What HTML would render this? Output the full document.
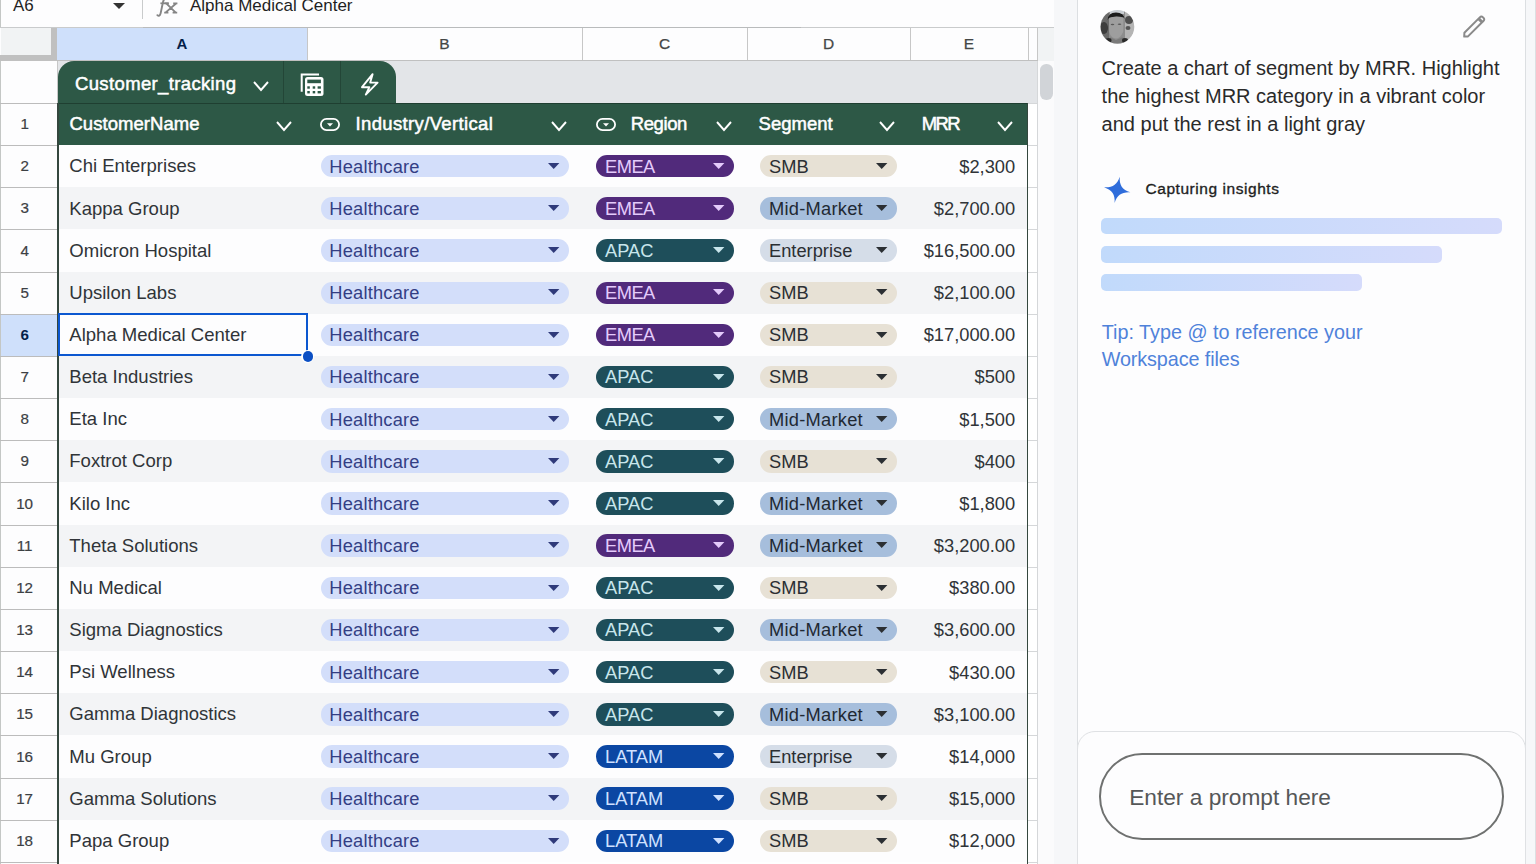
<!DOCTYPE html>
<html><head><meta charset="utf-8"><style>
html,body{margin:0;padding:0;width:1536px;height:864px;overflow:hidden;background:#fff;}
body{position:relative;font-family:"Liberation Sans",sans-serif;}
.r{position:absolute;}
.t{position:absolute;white-space:nowrap;}
svg{overflow:visible}
</style></head><body>
<div class="r" style="left:0px;top:0px;width:1054px;height:27px;background:#fdfdfe;"></div>
<div class="r" style="left:0px;top:0px;width:1px;height:864px;background:#c4c7c5;"></div>
<div class="r" style="left:0px;top:27px;width:1054px;height:1px;background:#c9cbcc;"></div>
<div class="r" style="left:143px;top:27px;width:658px;height:1px;background:#b9bbbc;"></div>
<div class="t " style="left:13.00px;top:-3.39px;font-size:17px;line-height:17px;color:#1f1f1f;font-weight:normal;">A6</div>
<svg class="r" style="left:112px;top:1px" width="14" height="9"><path d="M1 2 L13 2 L7 8 Z" fill="#333"/></svg>
<div class="r" style="left:142px;top:0px;width:1px;height:19px;background:#c9cbcc;"></div>
<svg class="r" style="left:150px;top:-6px" width="32" height="26" viewBox="150 -6 32 26">
<path d="M166.6 -3 C164.2 -2 163.4 0 162.8 3 L160.6 13.4 C160 16 158.6 16.4 157.4 15.2" fill="none" stroke="#858585" stroke-width="1.9" stroke-linecap="round"/>
<path d="M160.4 3.3 H168.6" stroke="#858585" stroke-width="1.7"/>
<path d="M166.2 3.3 L175.8 12.6 M176.4 3.3 L165.4 12.6 M164.6 3.3 H168.8 M173.2 3.3 H177.4 M164.2 12.6 H168.4 M172.6 12.6 H177.2" fill="none" stroke="#858585" stroke-width="1.8"/>
</svg>
<div class="t " style="left:190.00px;top:-3.39px;font-size:17px;line-height:17px;color:#1f1f1f;font-weight:normal;">Alpha Medical Center</div>
<div class="r" style="left:0px;top:28px;width:1054px;height:33px;background:#fdfdfe;"></div>
<div class="r" style="left:1px;top:28px;width:50px;height:27px;background:#f1f3f4;"></div>
<div class="r" style="left:51px;top:28px;width:6px;height:33px;background:#c0c0c0;"></div>
<div class="r" style="left:0px;top:55px;width:57px;height:6px;background:#c0c0c0;"></div>
<div class="r" style="left:57px;top:28px;width:250px;height:33px;background:#cfe0fb;"></div>
<div class="t" style="left:82.00px;width:200px;text-align:center;top:36.10px;font-size:15px;line-height:15px;color:#041e49;font-weight:bold;">A</div>
<div class="t" style="left:344.50px;width:200px;text-align:center;top:35.68px;font-size:15.5px;line-height:15.5px;color:#444746;font-weight:normal;-webkit-text-stroke:0.25px #444746;">B</div>
<div class="t" style="left:564.50px;width:200px;text-align:center;top:35.68px;font-size:15.5px;line-height:15.5px;color:#444746;font-weight:normal;-webkit-text-stroke:0.25px #444746;">C</div>
<div class="t" style="left:728.50px;width:200px;text-align:center;top:35.68px;font-size:15.5px;line-height:15.5px;color:#444746;font-weight:normal;-webkit-text-stroke:0.25px #444746;">D</div>
<div class="t" style="left:869.00px;width:200px;text-align:center;top:35.68px;font-size:15.5px;line-height:15.5px;color:#444746;font-weight:normal;-webkit-text-stroke:0.25px #444746;">E</div>
<div class="r" style="left:307px;top:28px;width:1px;height:33px;background:#c7c7c7;"></div>
<div class="r" style="left:582px;top:28px;width:1px;height:33px;background:#c7c7c7;"></div>
<div class="r" style="left:747px;top:28px;width:1px;height:33px;background:#c7c7c7;"></div>
<div class="r" style="left:910px;top:28px;width:1px;height:33px;background:#c7c7c7;"></div>
<div class="r" style="left:1028px;top:28px;width:1px;height:33px;background:#c7c7c7;"></div>
<div class="r" style="left:1037px;top:28px;width:1px;height:33px;background:#c7c7c7;"></div>
<div class="r" style="left:1038px;top:28px;width:16px;height:33px;background:#f1f3f4;"></div>
<div class="r" style="left:57px;top:60px;width:981px;height:1px;background:#c0c0c0;"></div>
<div class="r" style="left:1px;top:61px;width:56px;height:803px;background:#fdfdfe;"></div>
<div class="r" style="left:0px;top:103px;width:57px;height:1px;background:#c7c7c7;"></div>
<div class="r" style="left:0px;top:103px;width:57px;height:1px;background:#bcbcbc;"></div>
<div class="t" style="left:-75.40px;width:200px;text-align:center;top:116.11px;font-size:15.2px;line-height:15.2px;color:#3c4043;font-weight:normal;-webkit-text-stroke:0.2px #3c4043;">1</div>
<div class="r" style="left:0px;top:145px;width:57px;height:1px;background:#bcbcbc;"></div>
<div class="t" style="left:-75.40px;width:200px;text-align:center;top:158.27px;font-size:15.2px;line-height:15.2px;color:#3c4043;font-weight:normal;-webkit-text-stroke:0.2px #3c4043;">2</div>
<div class="r" style="left:0px;top:187px;width:57px;height:1px;background:#bcbcbc;"></div>
<div class="t" style="left:-75.40px;width:200px;text-align:center;top:200.43px;font-size:15.2px;line-height:15.2px;color:#3c4043;font-weight:normal;-webkit-text-stroke:0.2px #3c4043;">3</div>
<div class="r" style="left:0px;top:229px;width:57px;height:1px;background:#bcbcbc;"></div>
<div class="t" style="left:-75.40px;width:200px;text-align:center;top:242.59px;font-size:15.2px;line-height:15.2px;color:#3c4043;font-weight:normal;-webkit-text-stroke:0.2px #3c4043;">4</div>
<div class="r" style="left:0px;top:272px;width:57px;height:1px;background:#bcbcbc;"></div>
<div class="t" style="left:-75.40px;width:200px;text-align:center;top:284.75px;font-size:15.2px;line-height:15.2px;color:#3c4043;font-weight:normal;-webkit-text-stroke:0.2px #3c4043;">5</div>
<div class="r" style="left:1px;top:314px;width:56px;height:42px;background:#cfe0fb;"></div>
<div class="r" style="left:0px;top:314px;width:57px;height:1px;background:#bcbcbc;"></div>
<div class="t" style="left:-75.40px;width:200px;text-align:center;top:326.91px;font-size:15.2px;line-height:15.2px;color:#041e49;font-weight:bold;">6</div>
<div class="r" style="left:0px;top:356px;width:57px;height:1px;background:#bcbcbc;"></div>
<div class="t" style="left:-75.40px;width:200px;text-align:center;top:369.07px;font-size:15.2px;line-height:15.2px;color:#3c4043;font-weight:normal;-webkit-text-stroke:0.2px #3c4043;">7</div>
<div class="r" style="left:0px;top:398px;width:57px;height:1px;background:#bcbcbc;"></div>
<div class="t" style="left:-75.40px;width:200px;text-align:center;top:411.23px;font-size:15.2px;line-height:15.2px;color:#3c4043;font-weight:normal;-webkit-text-stroke:0.2px #3c4043;">8</div>
<div class="r" style="left:0px;top:440px;width:57px;height:1px;background:#bcbcbc;"></div>
<div class="t" style="left:-75.40px;width:200px;text-align:center;top:453.39px;font-size:15.2px;line-height:15.2px;color:#3c4043;font-weight:normal;-webkit-text-stroke:0.2px #3c4043;">9</div>
<div class="r" style="left:0px;top:482px;width:57px;height:1px;background:#bcbcbc;"></div>
<div class="t" style="left:-75.40px;width:200px;text-align:center;top:495.55px;font-size:15.2px;line-height:15.2px;color:#3c4043;font-weight:normal;-webkit-text-stroke:0.2px #3c4043;">10</div>
<div class="r" style="left:0px;top:525px;width:57px;height:1px;background:#bcbcbc;"></div>
<div class="t" style="left:-75.40px;width:200px;text-align:center;top:537.71px;font-size:15.2px;line-height:15.2px;color:#3c4043;font-weight:normal;-webkit-text-stroke:0.2px #3c4043;">11</div>
<div class="r" style="left:0px;top:567px;width:57px;height:1px;background:#bcbcbc;"></div>
<div class="t" style="left:-75.40px;width:200px;text-align:center;top:579.87px;font-size:15.2px;line-height:15.2px;color:#3c4043;font-weight:normal;-webkit-text-stroke:0.2px #3c4043;">12</div>
<div class="r" style="left:0px;top:609px;width:57px;height:1px;background:#bcbcbc;"></div>
<div class="t" style="left:-75.40px;width:200px;text-align:center;top:622.03px;font-size:15.2px;line-height:15.2px;color:#3c4043;font-weight:normal;-webkit-text-stroke:0.2px #3c4043;">13</div>
<div class="r" style="left:0px;top:651px;width:57px;height:1px;background:#bcbcbc;"></div>
<div class="t" style="left:-75.40px;width:200px;text-align:center;top:664.19px;font-size:15.2px;line-height:15.2px;color:#3c4043;font-weight:normal;-webkit-text-stroke:0.2px #3c4043;">14</div>
<div class="r" style="left:0px;top:693px;width:57px;height:1px;background:#bcbcbc;"></div>
<div class="t" style="left:-75.40px;width:200px;text-align:center;top:706.35px;font-size:15.2px;line-height:15.2px;color:#3c4043;font-weight:normal;-webkit-text-stroke:0.2px #3c4043;">15</div>
<div class="r" style="left:0px;top:735px;width:57px;height:1px;background:#bcbcbc;"></div>
<div class="t" style="left:-75.40px;width:200px;text-align:center;top:748.51px;font-size:15.2px;line-height:15.2px;color:#3c4043;font-weight:normal;-webkit-text-stroke:0.2px #3c4043;">16</div>
<div class="r" style="left:0px;top:778px;width:57px;height:1px;background:#bcbcbc;"></div>
<div class="t" style="left:-75.40px;width:200px;text-align:center;top:790.67px;font-size:15.2px;line-height:15.2px;color:#3c4043;font-weight:normal;-webkit-text-stroke:0.2px #3c4043;">17</div>
<div class="r" style="left:0px;top:820px;width:57px;height:1px;background:#bcbcbc;"></div>
<div class="t" style="left:-75.40px;width:200px;text-align:center;top:832.83px;font-size:15.2px;line-height:15.2px;color:#3c4043;font-weight:normal;-webkit-text-stroke:0.2px #3c4043;">18</div>
<div class="r" style="left:0px;top:862px;width:57px;height:1px;background:#bcbcbc;"></div>
<div class="r" style="left:57px;top:61px;width:1px;height:42px;background:#c7c7c7;"></div>
<div class="r" style="left:58px;top:61px;width:980px;height:42px;background:#e3e5e8;"></div>
<div class="r" style="left:58px;top:61px;width:337.5px;height:42px;background:#2d5846;border-radius:16px 16px 0 0"></div>
<div class="r" style="left:283px;top:61px;width:1px;height:42px;background:#234637;"></div>
<div class="r" style="left:340px;top:61px;width:1px;height:42px;background:#234637;"></div>
<div class="t " style="left:75.00px;top:75.14px;font-size:18.5px;line-height:18.5px;color:#ffffff;font-weight:normal;letter-spacing:0.36px;-webkit-text-stroke:0.5px #fff;">Customer_tracking</div>
<svg class="r" style="left:252.5px;top:81px" width="16" height="10"><polyline points="1,1 8.0,9 15,1" fill="none" stroke="#fff" stroke-width="1.9"/></svg>
<svg class="r" style="left:298px;top:71px" width="28" height="28" viewBox="298 71 28 28">
<path d="M301.7 91.7 V74.4 H319" fill="none" stroke="#fff" stroke-width="2"/>
<rect x="305" y="77" width="18.5" height="19" rx="2.5" fill="#fff"/>
<rect x="307.3" y="79.6" width="13.6" height="3.6" fill="#2d5846"/>
<rect x="307.3" y="86.3" width="2.5" height="2.4" fill="#2d5846"/>
<rect x="312.7" y="86.3" width="2.5" height="2.4" fill="#2d5846"/>
<rect x="317.6" y="86.3" width="3.3" height="2.4" fill="#2d5846"/>
<rect x="307.3" y="91" width="2.5" height="2.4" fill="#2d5846"/>
<rect x="312.7" y="91" width="2.5" height="2.4" fill="#2d5846"/>
<rect x="317.6" y="91" width="3.3" height="2.4" fill="#2d5846"/>
</svg>
<svg class="r" style="left:356px;top:70px" width="28" height="28" viewBox="356 70 28 28">
<path d="M372.6 74.2 L362 87.2 H369.4 L365.8 94.6 L377.6 82.6 H370.2 Z" fill="none" stroke="#fff" stroke-width="1.9" stroke-linejoin="round"/>
</svg>
<div class="r" style="left:58px;top:103px;width:970px;height:42.2px;background:#2d5846;"></div>
<div class="r" style="left:58px;top:103px;width:970px;height:1px;background:#1f3f31;"></div>
<div class="t " style="left:69.40px;top:115.04px;font-size:18.5px;line-height:18.5px;color:#ffffff;font-weight:normal;letter-spacing:0.05px;-webkit-text-stroke:0.5px #fff;">CustomerName</div>
<svg class="r" style="left:276px;top:121px" width="16" height="10"><polyline points="1,1 8.0,9 15,1" fill="none" stroke="#fff" stroke-width="1.9"/></svg>
<svg class="r" style="left:320.3px;top:118px" width="21" height="14"><rect x="0.9" y="0.9" width="18.2" height="11.2" rx="5.6" fill="none" stroke="#fff" stroke-width="1.8"/><path d="M7 5.2 H13 L10 8.4 Z" fill="#fff"/></svg>
<div class="t " style="left:355.50px;top:115.04px;font-size:18.5px;line-height:18.5px;color:#ffffff;font-weight:normal;letter-spacing:0.36px;-webkit-text-stroke:0.5px #fff;">Industry/Vertical</div>
<svg class="r" style="left:551px;top:121px" width="16" height="10"><polyline points="1,1 8.0,9 15,1" fill="none" stroke="#fff" stroke-width="1.9"/></svg>
<svg class="r" style="left:595.7px;top:118px" width="21" height="14"><rect x="0.9" y="0.9" width="18.2" height="11.2" rx="5.6" fill="none" stroke="#fff" stroke-width="1.8"/><path d="M7 5.2 H13 L10 8.4 Z" fill="#fff"/></svg>
<div class="t " style="left:630.70px;top:115.04px;font-size:18.5px;line-height:18.5px;color:#ffffff;font-weight:normal;letter-spacing:-0.4px;-webkit-text-stroke:0.5px #fff;">Region</div>
<svg class="r" style="left:716px;top:121px" width="16" height="10"><polyline points="1,1 8.0,9 15,1" fill="none" stroke="#fff" stroke-width="1.9"/></svg>
<div class="t " style="left:758.60px;top:115.04px;font-size:18.5px;line-height:18.5px;color:#ffffff;font-weight:normal;letter-spacing:0px;-webkit-text-stroke:0.5px #fff;">Segment</div>
<svg class="r" style="left:879px;top:121px" width="16" height="10"><polyline points="1,1 8.0,9 15,1" fill="none" stroke="#fff" stroke-width="1.9"/></svg>
<div class="t " style="left:921.80px;top:115.04px;font-size:18.5px;line-height:18.5px;color:#ffffff;font-weight:normal;letter-spacing:-1.6px;-webkit-text-stroke:0.5px #fff;">MRR</div>
<svg class="r" style="left:997px;top:121px" width="16" height="10"><polyline points="1,1 8.0,9 15,1" fill="none" stroke="#fff" stroke-width="1.9"/></svg>
<div class="r" style="left:58px;top:145.16px;width:970px;height:42.16px;background:#fdfdfe"></div>
<div class="t " style="left:69.30px;top:157.34px;font-size:18.55px;line-height:18.55px;color:#303438;font-weight:normal;">Chi Enterprises</div>
<div class="r" style="left:320.5px;top:155.04px;width:248.79999999999995px;height:22.4px;background:#d3defa;border-radius:11.2px"></div><div class="t " style="left:329.30px;top:157.65px;font-size:18.3px;line-height:18.3px;color:#343e84;font-weight:normal;letter-spacing:0.2px;">Healthcare</div><svg class="r" style="left:548.2px;top:162.94px" width="11.4" height="6"><path d="M0 0 H11.4 L5.7 6 Z" fill="#2f3a7a"/></svg>
<div class="r" style="left:596px;top:155.04px;width:137.5px;height:22.4px;background:#512a7b;border-radius:11.2px"></div><div class="t " style="left:605.00px;top:157.65px;font-size:18.3px;line-height:18.3px;color:#e4cbfb;font-weight:normal;letter-spacing:-0.5px;">EMEA</div><svg class="r" style="left:712.8px;top:162.94px" width="11.4" height="6"><path d="M0 0 H11.4 L5.7 6 Z" fill="#e4cbfb"/></svg>
<div class="r" style="left:760.4px;top:155.04px;width:136.30000000000007px;height:22.4px;background:#e7e1d5;border-radius:11.2px"></div><div class="t " style="left:769.00px;top:157.65px;font-size:18.3px;line-height:18.3px;color:#2b2f33;font-weight:normal;letter-spacing:0px;">SMB</div><svg class="r" style="left:875.8px;top:162.94px" width="11.4" height="6"><path d="M0 0 H11.4 L5.7 6 Z" fill="#2b2f33"/></svg>
<div class="t" style="right:520.80px;top:157.65px;font-size:18.3px;line-height:18.3px;color:#303438;font-weight:normal;">$2,300</div>
<div class="r" style="left:58px;top:187.32px;width:970px;height:42.16px;background:#f3f4f6"></div>
<div class="t " style="left:69.30px;top:199.50px;font-size:18.55px;line-height:18.55px;color:#303438;font-weight:normal;">Kappa Group</div>
<div class="r" style="left:320.5px;top:197.20px;width:248.79999999999995px;height:22.4px;background:#d3defa;border-radius:11.2px"></div><div class="t " style="left:329.30px;top:199.81px;font-size:18.3px;line-height:18.3px;color:#343e84;font-weight:normal;letter-spacing:0.2px;">Healthcare</div><svg class="r" style="left:548.2px;top:205.09999999999997px" width="11.4" height="6"><path d="M0 0 H11.4 L5.7 6 Z" fill="#2f3a7a"/></svg>
<div class="r" style="left:596px;top:197.20px;width:137.5px;height:22.4px;background:#512a7b;border-radius:11.2px"></div><div class="t " style="left:605.00px;top:199.81px;font-size:18.3px;line-height:18.3px;color:#e4cbfb;font-weight:normal;letter-spacing:-0.5px;">EMEA</div><svg class="r" style="left:712.8px;top:205.09999999999997px" width="11.4" height="6"><path d="M0 0 H11.4 L5.7 6 Z" fill="#e4cbfb"/></svg>
<div class="r" style="left:760.4px;top:197.20px;width:136.30000000000007px;height:22.4px;background:#a6bedc;border-radius:11.2px"></div><div class="t " style="left:769.00px;top:199.81px;font-size:18.3px;line-height:18.3px;color:#1f2933;font-weight:normal;letter-spacing:0.25px;">Mid-Market</div><svg class="r" style="left:875.8px;top:205.09999999999997px" width="11.4" height="6"><path d="M0 0 H11.4 L5.7 6 Z" fill="#2b2f33"/></svg>
<div class="t" style="right:520.80px;top:199.81px;font-size:18.3px;line-height:18.3px;color:#303438;font-weight:normal;">$2,700.00</div>
<div class="r" style="left:58px;top:229.48px;width:970px;height:42.16px;background:#fdfdfe"></div>
<div class="t " style="left:69.30px;top:241.66px;font-size:18.55px;line-height:18.55px;color:#303438;font-weight:normal;">Omicron Hospital</div>
<div class="r" style="left:320.5px;top:239.36px;width:248.79999999999995px;height:22.4px;background:#d3defa;border-radius:11.2px"></div><div class="t " style="left:329.30px;top:241.97px;font-size:18.3px;line-height:18.3px;color:#343e84;font-weight:normal;letter-spacing:0.2px;">Healthcare</div><svg class="r" style="left:548.2px;top:247.26px" width="11.4" height="6"><path d="M0 0 H11.4 L5.7 6 Z" fill="#2f3a7a"/></svg>
<div class="r" style="left:596px;top:239.36px;width:137.5px;height:22.4px;background:#1e4e5a;border-radius:11.2px"></div><div class="t " style="left:605.00px;top:241.97px;font-size:18.3px;line-height:18.3px;color:#c9e6ec;font-weight:normal;letter-spacing:0px;">APAC</div><svg class="r" style="left:712.8px;top:247.26px" width="11.4" height="6"><path d="M0 0 H11.4 L5.7 6 Z" fill="#c9e6ec"/></svg>
<div class="r" style="left:760.4px;top:239.36px;width:136.30000000000007px;height:22.4px;background:#d5dde8;border-radius:11.2px"></div><div class="t " style="left:769.00px;top:241.97px;font-size:18.3px;line-height:18.3px;color:#2b2f33;font-weight:normal;letter-spacing:0px;">Enterprise</div><svg class="r" style="left:875.8px;top:247.26px" width="11.4" height="6"><path d="M0 0 H11.4 L5.7 6 Z" fill="#2b2f33"/></svg>
<div class="t" style="right:520.80px;top:241.97px;font-size:18.3px;line-height:18.3px;color:#303438;font-weight:normal;">$16,500.00</div>
<div class="r" style="left:58px;top:271.64px;width:970px;height:42.16px;background:#f3f4f6"></div>
<div class="t " style="left:69.30px;top:283.82px;font-size:18.55px;line-height:18.55px;color:#303438;font-weight:normal;">Upsilon Labs</div>
<div class="r" style="left:320.5px;top:281.52px;width:248.79999999999995px;height:22.4px;background:#d3defa;border-radius:11.2px"></div><div class="t " style="left:329.30px;top:284.13px;font-size:18.3px;line-height:18.3px;color:#343e84;font-weight:normal;letter-spacing:0.2px;">Healthcare</div><svg class="r" style="left:548.2px;top:289.41999999999996px" width="11.4" height="6"><path d="M0 0 H11.4 L5.7 6 Z" fill="#2f3a7a"/></svg>
<div class="r" style="left:596px;top:281.52px;width:137.5px;height:22.4px;background:#512a7b;border-radius:11.2px"></div><div class="t " style="left:605.00px;top:284.13px;font-size:18.3px;line-height:18.3px;color:#e4cbfb;font-weight:normal;letter-spacing:-0.5px;">EMEA</div><svg class="r" style="left:712.8px;top:289.41999999999996px" width="11.4" height="6"><path d="M0 0 H11.4 L5.7 6 Z" fill="#e4cbfb"/></svg>
<div class="r" style="left:760.4px;top:281.52px;width:136.30000000000007px;height:22.4px;background:#e7e1d5;border-radius:11.2px"></div><div class="t " style="left:769.00px;top:284.13px;font-size:18.3px;line-height:18.3px;color:#2b2f33;font-weight:normal;letter-spacing:0px;">SMB</div><svg class="r" style="left:875.8px;top:289.41999999999996px" width="11.4" height="6"><path d="M0 0 H11.4 L5.7 6 Z" fill="#2b2f33"/></svg>
<div class="t" style="right:520.80px;top:284.13px;font-size:18.3px;line-height:18.3px;color:#303438;font-weight:normal;">$2,100.00</div>
<div class="r" style="left:58px;top:313.80px;width:970px;height:42.16px;background:#fdfdfe"></div>
<div class="t " style="left:69.30px;top:325.98px;font-size:18.55px;line-height:18.55px;color:#303438;font-weight:normal;">Alpha Medical Center</div>
<div class="r" style="left:320.5px;top:323.68px;width:248.79999999999995px;height:22.4px;background:#d3defa;border-radius:11.2px"></div><div class="t " style="left:329.30px;top:326.29px;font-size:18.3px;line-height:18.3px;color:#343e84;font-weight:normal;letter-spacing:0.2px;">Healthcare</div><svg class="r" style="left:548.2px;top:331.5799999999999px" width="11.4" height="6"><path d="M0 0 H11.4 L5.7 6 Z" fill="#2f3a7a"/></svg>
<div class="r" style="left:596px;top:323.68px;width:137.5px;height:22.4px;background:#512a7b;border-radius:11.2px"></div><div class="t " style="left:605.00px;top:326.29px;font-size:18.3px;line-height:18.3px;color:#e4cbfb;font-weight:normal;letter-spacing:-0.5px;">EMEA</div><svg class="r" style="left:712.8px;top:331.5799999999999px" width="11.4" height="6"><path d="M0 0 H11.4 L5.7 6 Z" fill="#e4cbfb"/></svg>
<div class="r" style="left:760.4px;top:323.68px;width:136.30000000000007px;height:22.4px;background:#e7e1d5;border-radius:11.2px"></div><div class="t " style="left:769.00px;top:326.29px;font-size:18.3px;line-height:18.3px;color:#2b2f33;font-weight:normal;letter-spacing:0px;">SMB</div><svg class="r" style="left:875.8px;top:331.5799999999999px" width="11.4" height="6"><path d="M0 0 H11.4 L5.7 6 Z" fill="#2b2f33"/></svg>
<div class="t" style="right:520.80px;top:326.29px;font-size:18.3px;line-height:18.3px;color:#303438;font-weight:normal;">$17,000.00</div>
<div class="r" style="left:58px;top:355.96px;width:970px;height:42.16px;background:#f3f4f6"></div>
<div class="t " style="left:69.30px;top:368.14px;font-size:18.55px;line-height:18.55px;color:#303438;font-weight:normal;">Beta Industries</div>
<div class="r" style="left:320.5px;top:365.84px;width:248.79999999999995px;height:22.4px;background:#d3defa;border-radius:11.2px"></div><div class="t " style="left:329.30px;top:368.45px;font-size:18.3px;line-height:18.3px;color:#343e84;font-weight:normal;letter-spacing:0.2px;">Healthcare</div><svg class="r" style="left:548.2px;top:373.73999999999995px" width="11.4" height="6"><path d="M0 0 H11.4 L5.7 6 Z" fill="#2f3a7a"/></svg>
<div class="r" style="left:596px;top:365.84px;width:137.5px;height:22.4px;background:#1e4e5a;border-radius:11.2px"></div><div class="t " style="left:605.00px;top:368.45px;font-size:18.3px;line-height:18.3px;color:#c9e6ec;font-weight:normal;letter-spacing:0px;">APAC</div><svg class="r" style="left:712.8px;top:373.73999999999995px" width="11.4" height="6"><path d="M0 0 H11.4 L5.7 6 Z" fill="#c9e6ec"/></svg>
<div class="r" style="left:760.4px;top:365.84px;width:136.30000000000007px;height:22.4px;background:#e7e1d5;border-radius:11.2px"></div><div class="t " style="left:769.00px;top:368.45px;font-size:18.3px;line-height:18.3px;color:#2b2f33;font-weight:normal;letter-spacing:0px;">SMB</div><svg class="r" style="left:875.8px;top:373.73999999999995px" width="11.4" height="6"><path d="M0 0 H11.4 L5.7 6 Z" fill="#2b2f33"/></svg>
<div class="t" style="right:520.80px;top:368.45px;font-size:18.3px;line-height:18.3px;color:#303438;font-weight:normal;">$500</div>
<div class="r" style="left:58px;top:398.12px;width:970px;height:42.16px;background:#fdfdfe"></div>
<div class="t " style="left:69.30px;top:410.30px;font-size:18.55px;line-height:18.55px;color:#303438;font-weight:normal;">Eta Inc</div>
<div class="r" style="left:320.5px;top:408.00px;width:248.79999999999995px;height:22.4px;background:#d3defa;border-radius:11.2px"></div><div class="t " style="left:329.30px;top:410.61px;font-size:18.3px;line-height:18.3px;color:#343e84;font-weight:normal;letter-spacing:0.2px;">Healthcare</div><svg class="r" style="left:548.2px;top:415.9px" width="11.4" height="6"><path d="M0 0 H11.4 L5.7 6 Z" fill="#2f3a7a"/></svg>
<div class="r" style="left:596px;top:408.00px;width:137.5px;height:22.4px;background:#1e4e5a;border-radius:11.2px"></div><div class="t " style="left:605.00px;top:410.61px;font-size:18.3px;line-height:18.3px;color:#c9e6ec;font-weight:normal;letter-spacing:0px;">APAC</div><svg class="r" style="left:712.8px;top:415.9px" width="11.4" height="6"><path d="M0 0 H11.4 L5.7 6 Z" fill="#c9e6ec"/></svg>
<div class="r" style="left:760.4px;top:408.00px;width:136.30000000000007px;height:22.4px;background:#a6bedc;border-radius:11.2px"></div><div class="t " style="left:769.00px;top:410.61px;font-size:18.3px;line-height:18.3px;color:#1f2933;font-weight:normal;letter-spacing:0.25px;">Mid-Market</div><svg class="r" style="left:875.8px;top:415.9px" width="11.4" height="6"><path d="M0 0 H11.4 L5.7 6 Z" fill="#2b2f33"/></svg>
<div class="t" style="right:520.80px;top:410.61px;font-size:18.3px;line-height:18.3px;color:#303438;font-weight:normal;">$1,500</div>
<div class="r" style="left:58px;top:440.28px;width:970px;height:42.16px;background:#f3f4f6"></div>
<div class="t " style="left:69.30px;top:452.46px;font-size:18.55px;line-height:18.55px;color:#303438;font-weight:normal;">Foxtrot Corp</div>
<div class="r" style="left:320.5px;top:450.16px;width:248.79999999999995px;height:22.4px;background:#d3defa;border-radius:11.2px"></div><div class="t " style="left:329.30px;top:452.77px;font-size:18.3px;line-height:18.3px;color:#343e84;font-weight:normal;letter-spacing:0.2px;">Healthcare</div><svg class="r" style="left:548.2px;top:458.05999999999995px" width="11.4" height="6"><path d="M0 0 H11.4 L5.7 6 Z" fill="#2f3a7a"/></svg>
<div class="r" style="left:596px;top:450.16px;width:137.5px;height:22.4px;background:#1e4e5a;border-radius:11.2px"></div><div class="t " style="left:605.00px;top:452.77px;font-size:18.3px;line-height:18.3px;color:#c9e6ec;font-weight:normal;letter-spacing:0px;">APAC</div><svg class="r" style="left:712.8px;top:458.05999999999995px" width="11.4" height="6"><path d="M0 0 H11.4 L5.7 6 Z" fill="#c9e6ec"/></svg>
<div class="r" style="left:760.4px;top:450.16px;width:136.30000000000007px;height:22.4px;background:#e7e1d5;border-radius:11.2px"></div><div class="t " style="left:769.00px;top:452.77px;font-size:18.3px;line-height:18.3px;color:#2b2f33;font-weight:normal;letter-spacing:0px;">SMB</div><svg class="r" style="left:875.8px;top:458.05999999999995px" width="11.4" height="6"><path d="M0 0 H11.4 L5.7 6 Z" fill="#2b2f33"/></svg>
<div class="t" style="right:520.80px;top:452.77px;font-size:18.3px;line-height:18.3px;color:#303438;font-weight:normal;">$400</div>
<div class="r" style="left:58px;top:482.44px;width:970px;height:42.16px;background:#fdfdfe"></div>
<div class="t " style="left:69.30px;top:494.62px;font-size:18.55px;line-height:18.55px;color:#303438;font-weight:normal;">Kilo Inc</div>
<div class="r" style="left:320.5px;top:492.32px;width:248.79999999999995px;height:22.4px;background:#d3defa;border-radius:11.2px"></div><div class="t " style="left:329.30px;top:494.93px;font-size:18.3px;line-height:18.3px;color:#343e84;font-weight:normal;letter-spacing:0.2px;">Healthcare</div><svg class="r" style="left:548.2px;top:500.2199999999999px" width="11.4" height="6"><path d="M0 0 H11.4 L5.7 6 Z" fill="#2f3a7a"/></svg>
<div class="r" style="left:596px;top:492.32px;width:137.5px;height:22.4px;background:#1e4e5a;border-radius:11.2px"></div><div class="t " style="left:605.00px;top:494.93px;font-size:18.3px;line-height:18.3px;color:#c9e6ec;font-weight:normal;letter-spacing:0px;">APAC</div><svg class="r" style="left:712.8px;top:500.2199999999999px" width="11.4" height="6"><path d="M0 0 H11.4 L5.7 6 Z" fill="#c9e6ec"/></svg>
<div class="r" style="left:760.4px;top:492.32px;width:136.30000000000007px;height:22.4px;background:#a6bedc;border-radius:11.2px"></div><div class="t " style="left:769.00px;top:494.93px;font-size:18.3px;line-height:18.3px;color:#1f2933;font-weight:normal;letter-spacing:0.25px;">Mid-Market</div><svg class="r" style="left:875.8px;top:500.2199999999999px" width="11.4" height="6"><path d="M0 0 H11.4 L5.7 6 Z" fill="#2b2f33"/></svg>
<div class="t" style="right:520.80px;top:494.93px;font-size:18.3px;line-height:18.3px;color:#303438;font-weight:normal;">$1,800</div>
<div class="r" style="left:58px;top:524.60px;width:970px;height:42.16px;background:#f3f4f6"></div>
<div class="t " style="left:69.30px;top:536.78px;font-size:18.55px;line-height:18.55px;color:#303438;font-weight:normal;">Theta Solutions</div>
<div class="r" style="left:320.5px;top:534.48px;width:248.79999999999995px;height:22.4px;background:#d3defa;border-radius:11.2px"></div><div class="t " style="left:329.30px;top:537.09px;font-size:18.3px;line-height:18.3px;color:#343e84;font-weight:normal;letter-spacing:0.2px;">Healthcare</div><svg class="r" style="left:548.2px;top:542.38px" width="11.4" height="6"><path d="M0 0 H11.4 L5.7 6 Z" fill="#2f3a7a"/></svg>
<div class="r" style="left:596px;top:534.48px;width:137.5px;height:22.4px;background:#512a7b;border-radius:11.2px"></div><div class="t " style="left:605.00px;top:537.09px;font-size:18.3px;line-height:18.3px;color:#e4cbfb;font-weight:normal;letter-spacing:-0.5px;">EMEA</div><svg class="r" style="left:712.8px;top:542.38px" width="11.4" height="6"><path d="M0 0 H11.4 L5.7 6 Z" fill="#e4cbfb"/></svg>
<div class="r" style="left:760.4px;top:534.48px;width:136.30000000000007px;height:22.4px;background:#a6bedc;border-radius:11.2px"></div><div class="t " style="left:769.00px;top:537.09px;font-size:18.3px;line-height:18.3px;color:#1f2933;font-weight:normal;letter-spacing:0.25px;">Mid-Market</div><svg class="r" style="left:875.8px;top:542.38px" width="11.4" height="6"><path d="M0 0 H11.4 L5.7 6 Z" fill="#2b2f33"/></svg>
<div class="t" style="right:520.80px;top:537.09px;font-size:18.3px;line-height:18.3px;color:#303438;font-weight:normal;">$3,200.00</div>
<div class="r" style="left:58px;top:566.76px;width:970px;height:42.16px;background:#fdfdfe"></div>
<div class="t " style="left:69.30px;top:578.94px;font-size:18.55px;line-height:18.55px;color:#303438;font-weight:normal;">Nu Medical</div>
<div class="r" style="left:320.5px;top:576.64px;width:248.79999999999995px;height:22.4px;background:#d3defa;border-radius:11.2px"></div><div class="t " style="left:329.30px;top:579.25px;font-size:18.3px;line-height:18.3px;color:#343e84;font-weight:normal;letter-spacing:0.2px;">Healthcare</div><svg class="r" style="left:548.2px;top:584.5400000000001px" width="11.4" height="6"><path d="M0 0 H11.4 L5.7 6 Z" fill="#2f3a7a"/></svg>
<div class="r" style="left:596px;top:576.64px;width:137.5px;height:22.4px;background:#1e4e5a;border-radius:11.2px"></div><div class="t " style="left:605.00px;top:579.25px;font-size:18.3px;line-height:18.3px;color:#c9e6ec;font-weight:normal;letter-spacing:0px;">APAC</div><svg class="r" style="left:712.8px;top:584.5400000000001px" width="11.4" height="6"><path d="M0 0 H11.4 L5.7 6 Z" fill="#c9e6ec"/></svg>
<div class="r" style="left:760.4px;top:576.64px;width:136.30000000000007px;height:22.4px;background:#e7e1d5;border-radius:11.2px"></div><div class="t " style="left:769.00px;top:579.25px;font-size:18.3px;line-height:18.3px;color:#2b2f33;font-weight:normal;letter-spacing:0px;">SMB</div><svg class="r" style="left:875.8px;top:584.5400000000001px" width="11.4" height="6"><path d="M0 0 H11.4 L5.7 6 Z" fill="#2b2f33"/></svg>
<div class="t" style="right:520.80px;top:579.25px;font-size:18.3px;line-height:18.3px;color:#303438;font-weight:normal;">$380.00</div>
<div class="r" style="left:58px;top:608.92px;width:970px;height:42.16px;background:#f3f4f6"></div>
<div class="t " style="left:69.30px;top:621.10px;font-size:18.55px;line-height:18.55px;color:#303438;font-weight:normal;">Sigma Diagnostics</div>
<div class="r" style="left:320.5px;top:618.80px;width:248.79999999999995px;height:22.4px;background:#d3defa;border-radius:11.2px"></div><div class="t " style="left:329.30px;top:621.41px;font-size:18.3px;line-height:18.3px;color:#343e84;font-weight:normal;letter-spacing:0.2px;">Healthcare</div><svg class="r" style="left:548.2px;top:626.7px" width="11.4" height="6"><path d="M0 0 H11.4 L5.7 6 Z" fill="#2f3a7a"/></svg>
<div class="r" style="left:596px;top:618.80px;width:137.5px;height:22.4px;background:#1e4e5a;border-radius:11.2px"></div><div class="t " style="left:605.00px;top:621.41px;font-size:18.3px;line-height:18.3px;color:#c9e6ec;font-weight:normal;letter-spacing:0px;">APAC</div><svg class="r" style="left:712.8px;top:626.7px" width="11.4" height="6"><path d="M0 0 H11.4 L5.7 6 Z" fill="#c9e6ec"/></svg>
<div class="r" style="left:760.4px;top:618.80px;width:136.30000000000007px;height:22.4px;background:#a6bedc;border-radius:11.2px"></div><div class="t " style="left:769.00px;top:621.41px;font-size:18.3px;line-height:18.3px;color:#1f2933;font-weight:normal;letter-spacing:0.25px;">Mid-Market</div><svg class="r" style="left:875.8px;top:626.7px" width="11.4" height="6"><path d="M0 0 H11.4 L5.7 6 Z" fill="#2b2f33"/></svg>
<div class="t" style="right:520.80px;top:621.41px;font-size:18.3px;line-height:18.3px;color:#303438;font-weight:normal;">$3,600.00</div>
<div class="r" style="left:58px;top:651.08px;width:970px;height:42.16px;background:#fdfdfe"></div>
<div class="t " style="left:69.30px;top:663.26px;font-size:18.55px;line-height:18.55px;color:#303438;font-weight:normal;">Psi Wellness</div>
<div class="r" style="left:320.5px;top:660.96px;width:248.79999999999995px;height:22.4px;background:#d3defa;border-radius:11.2px"></div><div class="t " style="left:329.30px;top:663.57px;font-size:18.3px;line-height:18.3px;color:#343e84;font-weight:normal;letter-spacing:0.2px;">Healthcare</div><svg class="r" style="left:548.2px;top:668.86px" width="11.4" height="6"><path d="M0 0 H11.4 L5.7 6 Z" fill="#2f3a7a"/></svg>
<div class="r" style="left:596px;top:660.96px;width:137.5px;height:22.4px;background:#1e4e5a;border-radius:11.2px"></div><div class="t " style="left:605.00px;top:663.57px;font-size:18.3px;line-height:18.3px;color:#c9e6ec;font-weight:normal;letter-spacing:0px;">APAC</div><svg class="r" style="left:712.8px;top:668.86px" width="11.4" height="6"><path d="M0 0 H11.4 L5.7 6 Z" fill="#c9e6ec"/></svg>
<div class="r" style="left:760.4px;top:660.96px;width:136.30000000000007px;height:22.4px;background:#e7e1d5;border-radius:11.2px"></div><div class="t " style="left:769.00px;top:663.57px;font-size:18.3px;line-height:18.3px;color:#2b2f33;font-weight:normal;letter-spacing:0px;">SMB</div><svg class="r" style="left:875.8px;top:668.86px" width="11.4" height="6"><path d="M0 0 H11.4 L5.7 6 Z" fill="#2b2f33"/></svg>
<div class="t" style="right:520.80px;top:663.57px;font-size:18.3px;line-height:18.3px;color:#303438;font-weight:normal;">$430.00</div>
<div class="r" style="left:58px;top:693.24px;width:970px;height:42.16px;background:#f3f4f6"></div>
<div class="t " style="left:69.30px;top:705.42px;font-size:18.55px;line-height:18.55px;color:#303438;font-weight:normal;">Gamma Diagnostics</div>
<div class="r" style="left:320.5px;top:703.12px;width:248.79999999999995px;height:22.4px;background:#d3defa;border-radius:11.2px"></div><div class="t " style="left:329.30px;top:705.73px;font-size:18.3px;line-height:18.3px;color:#343e84;font-weight:normal;letter-spacing:0.2px;">Healthcare</div><svg class="r" style="left:548.2px;top:711.0200000000001px" width="11.4" height="6"><path d="M0 0 H11.4 L5.7 6 Z" fill="#2f3a7a"/></svg>
<div class="r" style="left:596px;top:703.12px;width:137.5px;height:22.4px;background:#1e4e5a;border-radius:11.2px"></div><div class="t " style="left:605.00px;top:705.73px;font-size:18.3px;line-height:18.3px;color:#c9e6ec;font-weight:normal;letter-spacing:0px;">APAC</div><svg class="r" style="left:712.8px;top:711.0200000000001px" width="11.4" height="6"><path d="M0 0 H11.4 L5.7 6 Z" fill="#c9e6ec"/></svg>
<div class="r" style="left:760.4px;top:703.12px;width:136.30000000000007px;height:22.4px;background:#a6bedc;border-radius:11.2px"></div><div class="t " style="left:769.00px;top:705.73px;font-size:18.3px;line-height:18.3px;color:#1f2933;font-weight:normal;letter-spacing:0.25px;">Mid-Market</div><svg class="r" style="left:875.8px;top:711.0200000000001px" width="11.4" height="6"><path d="M0 0 H11.4 L5.7 6 Z" fill="#2b2f33"/></svg>
<div class="t" style="right:520.80px;top:705.73px;font-size:18.3px;line-height:18.3px;color:#303438;font-weight:normal;">$3,100.00</div>
<div class="r" style="left:58px;top:735.40px;width:970px;height:42.16px;background:#fdfdfe"></div>
<div class="t " style="left:69.30px;top:747.58px;font-size:18.55px;line-height:18.55px;color:#303438;font-weight:normal;">Mu Group</div>
<div class="r" style="left:320.5px;top:745.28px;width:248.79999999999995px;height:22.4px;background:#d3defa;border-radius:11.2px"></div><div class="t " style="left:329.30px;top:747.89px;font-size:18.3px;line-height:18.3px;color:#343e84;font-weight:normal;letter-spacing:0.2px;">Healthcare</div><svg class="r" style="left:548.2px;top:753.1800000000001px" width="11.4" height="6"><path d="M0 0 H11.4 L5.7 6 Z" fill="#2f3a7a"/></svg>
<div class="r" style="left:596px;top:745.28px;width:137.5px;height:22.4px;background:#0b47a3;border-radius:11.2px"></div><div class="t " style="left:605.00px;top:747.89px;font-size:18.3px;line-height:18.3px;color:#cfe1ff;font-weight:normal;letter-spacing:0px;">LATAM</div><svg class="r" style="left:712.8px;top:753.1800000000001px" width="11.4" height="6"><path d="M0 0 H11.4 L5.7 6 Z" fill="#cfe1ff"/></svg>
<div class="r" style="left:760.4px;top:745.28px;width:136.30000000000007px;height:22.4px;background:#d5dde8;border-radius:11.2px"></div><div class="t " style="left:769.00px;top:747.89px;font-size:18.3px;line-height:18.3px;color:#2b2f33;font-weight:normal;letter-spacing:0px;">Enterprise</div><svg class="r" style="left:875.8px;top:753.1800000000001px" width="11.4" height="6"><path d="M0 0 H11.4 L5.7 6 Z" fill="#2b2f33"/></svg>
<div class="t" style="right:520.80px;top:747.89px;font-size:18.3px;line-height:18.3px;color:#303438;font-weight:normal;">$14,000</div>
<div class="r" style="left:58px;top:777.56px;width:970px;height:42.16px;background:#f3f4f6"></div>
<div class="t " style="left:69.30px;top:789.74px;font-size:18.55px;line-height:18.55px;color:#303438;font-weight:normal;">Gamma Solutions</div>
<div class="r" style="left:320.5px;top:787.44px;width:248.79999999999995px;height:22.4px;background:#d3defa;border-radius:11.2px"></div><div class="t " style="left:329.30px;top:790.05px;font-size:18.3px;line-height:18.3px;color:#343e84;font-weight:normal;letter-spacing:0.2px;">Healthcare</div><svg class="r" style="left:548.2px;top:795.34px" width="11.4" height="6"><path d="M0 0 H11.4 L5.7 6 Z" fill="#2f3a7a"/></svg>
<div class="r" style="left:596px;top:787.44px;width:137.5px;height:22.4px;background:#0b47a3;border-radius:11.2px"></div><div class="t " style="left:605.00px;top:790.05px;font-size:18.3px;line-height:18.3px;color:#cfe1ff;font-weight:normal;letter-spacing:0px;">LATAM</div><svg class="r" style="left:712.8px;top:795.34px" width="11.4" height="6"><path d="M0 0 H11.4 L5.7 6 Z" fill="#cfe1ff"/></svg>
<div class="r" style="left:760.4px;top:787.44px;width:136.30000000000007px;height:22.4px;background:#e7e1d5;border-radius:11.2px"></div><div class="t " style="left:769.00px;top:790.05px;font-size:18.3px;line-height:18.3px;color:#2b2f33;font-weight:normal;letter-spacing:0px;">SMB</div><svg class="r" style="left:875.8px;top:795.34px" width="11.4" height="6"><path d="M0 0 H11.4 L5.7 6 Z" fill="#2b2f33"/></svg>
<div class="t" style="right:520.80px;top:790.05px;font-size:18.3px;line-height:18.3px;color:#303438;font-weight:normal;">$15,000</div>
<div class="r" style="left:58px;top:819.72px;width:970px;height:42.16px;background:#fdfdfe"></div>
<div class="t " style="left:69.30px;top:831.90px;font-size:18.55px;line-height:18.55px;color:#303438;font-weight:normal;">Papa Group</div>
<div class="r" style="left:320.5px;top:829.60px;width:248.79999999999995px;height:22.4px;background:#d3defa;border-radius:11.2px"></div><div class="t " style="left:329.30px;top:832.21px;font-size:18.3px;line-height:18.3px;color:#343e84;font-weight:normal;letter-spacing:0.2px;">Healthcare</div><svg class="r" style="left:548.2px;top:837.5px" width="11.4" height="6"><path d="M0 0 H11.4 L5.7 6 Z" fill="#2f3a7a"/></svg>
<div class="r" style="left:596px;top:829.60px;width:137.5px;height:22.4px;background:#0b47a3;border-radius:11.2px"></div><div class="t " style="left:605.00px;top:832.21px;font-size:18.3px;line-height:18.3px;color:#cfe1ff;font-weight:normal;letter-spacing:0px;">LATAM</div><svg class="r" style="left:712.8px;top:837.5px" width="11.4" height="6"><path d="M0 0 H11.4 L5.7 6 Z" fill="#cfe1ff"/></svg>
<div class="r" style="left:760.4px;top:829.60px;width:136.30000000000007px;height:22.4px;background:#e7e1d5;border-radius:11.2px"></div><div class="t " style="left:769.00px;top:832.21px;font-size:18.3px;line-height:18.3px;color:#2b2f33;font-weight:normal;letter-spacing:0px;">SMB</div><svg class="r" style="left:875.8px;top:837.5px" width="11.4" height="6"><path d="M0 0 H11.4 L5.7 6 Z" fill="#2b2f33"/></svg>
<div class="t" style="right:520.80px;top:832.21px;font-size:18.3px;line-height:18.3px;color:#303438;font-weight:normal;">$12,000</div>
<div class="r" style="left:1028px;top:61px;width:10px;height:42px;background:#e3e5e8;"></div>
<div class="r" style="left:1028px;top:103px;width:9px;height:1px;background:#d5d7d9;"></div>
<div class="r" style="left:1028px;top:145px;width:9px;height:1px;background:#d5d7d9;"></div>
<div class="r" style="left:1028px;top:187px;width:9px;height:1px;background:#d5d7d9;"></div>
<div class="r" style="left:1028px;top:229px;width:9px;height:1px;background:#d5d7d9;"></div>
<div class="r" style="left:1028px;top:272px;width:9px;height:1px;background:#d5d7d9;"></div>
<div class="r" style="left:1028px;top:314px;width:9px;height:1px;background:#d5d7d9;"></div>
<div class="r" style="left:1028px;top:356px;width:9px;height:1px;background:#d5d7d9;"></div>
<div class="r" style="left:1028px;top:398px;width:9px;height:1px;background:#d5d7d9;"></div>
<div class="r" style="left:1028px;top:440px;width:9px;height:1px;background:#d5d7d9;"></div>
<div class="r" style="left:1028px;top:482px;width:9px;height:1px;background:#d5d7d9;"></div>
<div class="r" style="left:1028px;top:525px;width:9px;height:1px;background:#d5d7d9;"></div>
<div class="r" style="left:1028px;top:567px;width:9px;height:1px;background:#d5d7d9;"></div>
<div class="r" style="left:1028px;top:609px;width:9px;height:1px;background:#d5d7d9;"></div>
<div class="r" style="left:1028px;top:651px;width:9px;height:1px;background:#d5d7d9;"></div>
<div class="r" style="left:1028px;top:693px;width:9px;height:1px;background:#d5d7d9;"></div>
<div class="r" style="left:1028px;top:735px;width:9px;height:1px;background:#d5d7d9;"></div>
<div class="r" style="left:1028px;top:778px;width:9px;height:1px;background:#d5d7d9;"></div>
<div class="r" style="left:1028px;top:820px;width:9px;height:1px;background:#d5d7d9;"></div>
<div class="r" style="left:1028px;top:862px;width:9px;height:1px;background:#d5d7d9;"></div>
<div class="r" style="left:1037px;top:61px;width:1px;height:803px;background:#d5d7d9;"></div>
<div class="r" style="left:57px;top:103px;width:1.5px;height:761px;background:#34473e;"></div>
<div class="r" style="left:1027px;top:103px;width:1.2px;height:761px;background:#34473e;"></div>
<div class="r" style="left:57.5px;top:313.20px;width:250px;height:42.56px;border:2.8px solid #0b57d0;box-sizing:border-box;background:transparent"></div>
<div class="r" style="left:301.10px;top:349.76px;width:13.4px;height:13.4px;border-radius:50%;background:#fff"></div>
<div class="r" style="left:302.60px;top:351.26px;width:10.4px;height:10.4px;border-radius:50%;background:#0b4fc4"></div>
<div class="r" style="left:1038px;top:61px;width:16px;height:803px;background:#fbfbfc;"></div>
<div class="r" style="left:1040.3px;top:64px;width:12.4px;height:35.5px;border-radius:6.2px;background:#d1d4d8"></div>
<div class="r" style="left:1054px;top:0px;width:23px;height:864px;background:#f6f7f9;"></div>
<div class="r" style="left:1077px;top:0px;width:448px;height:864px;background:#fdfdfe;"></div>
<div class="r" style="left:1077px;top:0px;width:1px;height:864px;background:#dcdfe2;"></div>
<div class="r" style="left:1525px;top:0px;width:1px;height:864px;background:#dcdfe2;"></div>
<div class="r" style="left:1526px;top:0px;width:10px;height:864px;background:#f6f7f9;"></div>
<div class="r" style="left:1535px;top:0px;width:1px;height:864px;background:#dcdfe2;"></div>
<svg class="r" style="left:1098px;top:8px" width="39" height="39" viewBox="1098 8 39 39">
<defs><clipPath id="cc"><circle cx="1117.4" cy="26.8" r="16.9"/></clipPath>
<filter id="bl" x="-20%" y="-20%" width="140%" height="140%"><feGaussianBlur stdDeviation="0.7"/></filter></defs>
<g clip-path="url(#cc)"><g filter="url(#bl)">
<rect x="1098" y="8" width="39" height="39" fill="#8c8c8c"/>
<rect x="1098" y="8" width="11" height="39" fill="#6a6a6a"/>
<ellipse cx="1104" cy="28" rx="4" ry="6" fill="#3c3c3c"/>
<rect x="1125" y="8" width="12" height="39" fill="#b4b4b4"/>
<ellipse cx="1129" cy="20" rx="4" ry="4" fill="#505050"/>
<ellipse cx="1128" cy="28" rx="2.5" ry="2" fill="#555"/>
<rect x="1110" y="8" width="14" height="6" fill="#c8cdd2"/>
<path d="M1107.6 20 Q1108 13 1116 12.6 Q1124 12.8 1124.6 19 L1123.6 17.6 Q1116 15 1109 18 Z" fill="#1c1c1c"/>
<path d="M1109 18 Q1116 15.6 1123.4 17.8 L1123.2 32 Q1120 38.6 1116 38.6 Q1111.2 38.4 1109.2 32 Z" fill="#9e9e9e"/>
<ellipse cx="1112.5" cy="24.5" rx="1.8" ry="0.8" fill="#5a5a5a"/>
<ellipse cx="1119.5" cy="24.3" rx="1.8" ry="0.8" fill="#5a5a5a"/>
<path d="M1102 47 Q1104 39 1111 37.6 L1116 40 L1122 37.6 Q1129 39 1132 47 Z" fill="#7a7a7a"/>
<ellipse cx="1108.5" cy="40.5" rx="3" ry="2.4" fill="#2c2c2c"/>
<ellipse cx="1125" cy="40.5" rx="3" ry="2.4" fill="#2c2c2c"/>
</g></g></svg>
<svg class="r" style="left:1460px;top:13px" width="28" height="28" viewBox="1460 13 28 28">
<path d="M1464.2 36.6 L1464.4 32.8 L1479.8 17.4 Q1481.4 15.8 1483.0 17.4 L1483.4 17.8 Q1485 19.4 1483.4 21 L1468 36.4 Z" fill="none" stroke="#8a8a8a" stroke-width="2" stroke-linejoin="round"/>
<path d="M1478.6 18.6 L1482.2 22.2" stroke="#8a8a8a" stroke-width="3"/>
</svg>
<div class="t " style="left:1101.60px;top:58.07px;font-size:20px;line-height:20px;color:#2a2a2a;font-weight:normal;letter-spacing:0px;white-space:nowrap;">Create a chart of segment by MRR. Highlight</div>
<div class="t " style="left:1101.60px;top:85.67px;font-size:20px;line-height:20px;color:#2a2a2a;font-weight:normal;letter-spacing:0px;white-space:nowrap;">the highest MRR category in a vibrant color</div>
<div class="t " style="left:1101.60px;top:113.77px;font-size:20px;line-height:20px;color:#2a2a2a;font-weight:normal;letter-spacing:0px;white-space:nowrap;">and put the rest in a light gray</div>
<svg class="r" style="left:1100px;top:173px" width="34" height="34" viewBox="0 0 34 34">
<g transform="rotate(11 17.2 16.8)"><path d="M17.2 3.4 C18.2 11.6 22 15.6 30.6 16.8 C22 18 18.2 22 17.2 30.2 C16.2 22 12.4 18 3.8 16.8 C12.4 15.6 16.2 11.6 17.2 3.4 Z" fill="#2f6ddb"/></g>
</svg>
<div class="t " style="left:1145.50px;top:181.28px;font-size:15.5px;line-height:15.5px;color:#1f1f1f;font-weight:normal;letter-spacing:0.55px;-webkit-text-stroke:0.35px #1f1f1f;">Capturing insights</div>
<div class="r" style="left:1100.6px;top:217.6px;width:401.4px;height:16.8px;border-radius:5px;background:linear-gradient(90deg,#c1dafb,#d5dbfb)"></div>
<div class="r" style="left:1100.6px;top:246.2px;width:341.4px;height:16.8px;border-radius:5px;background:linear-gradient(90deg,#c1dafb,#d5dbfb)"></div>
<div class="r" style="left:1100.6px;top:274.1px;width:261.0px;height:16.8px;border-radius:5px;background:linear-gradient(90deg,#c1dafb,#d5dbfb)"></div>
<div class="t " style="left:1101.70px;top:322.54px;font-size:19.8px;line-height:19.8px;color:#4f82da;font-weight:normal;letter-spacing:0px;">Tip: Type @ to reference your</div>
<div class="t " style="left:1101.70px;top:349.84px;font-size:19.8px;line-height:19.8px;color:#4f82da;font-weight:normal;letter-spacing:-0.1px;">Workspace files</div>
<div class="r" style="left:1077px;top:731px;width:449px;height:140px;border:1px solid #dfe1e4;border-radius:18px 18px 0 0;background:#fdfdfe;box-sizing:border-box"></div>
<div class="r" style="left:1099.4px;top:753.4px;width:404.5px;height:86.4px;border:2px solid #6f7170;border-radius:43.2px;box-sizing:border-box"></div>
<div class="t " style="left:1129.20px;top:785.78px;font-size:22.7px;line-height:22.7px;color:#555758;font-weight:normal;">Enter a prompt here</div>
</body></html>
